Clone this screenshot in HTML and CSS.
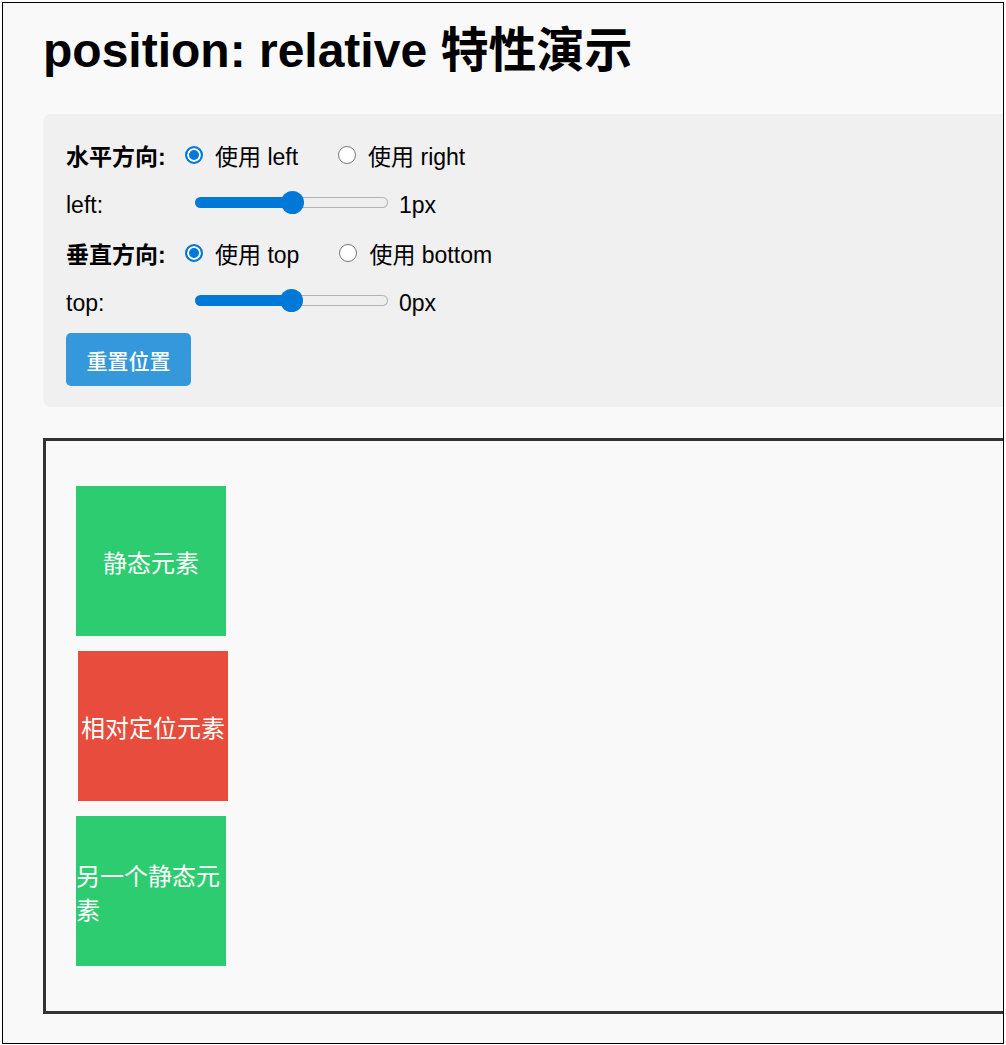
FILE: index.html
```html
<!DOCTYPE html>
<html>
	<head>
		<meta charset='utf-8' />
		<title>position: relative 特性演示</title>
		<link rel="stylesheet" href="styles.css">
	</head>
	<body>
		<div class="window">
			<div class="page">
				<h1>position: relative 特性演示</h1>

				<div class="controls">
					<div class="row row-choice">
						<span class="label strong">水平方向:</span>
						<label class="opt"><input type="radio" name="horizontal" checked />使用 left</label>
						<label class="opt"><input type="radio" name="horizontal" />使用 right</label>
					</div>
					<div class="row">
						<span class="label">left:</span>
						<input type="range" class="slider" min="-100" max="100" value="1" style="--fill:50.3%" />
						<span class="val">1px</span>
					</div>
					<div class="row row-choice">
						<span class="label strong">垂直方向:</span>
						<label class="opt"><input type="radio" name="vertical" checked />使用 top</label>
						<label class="opt"><input type="radio" name="vertical" />使用 bottom</label>
					</div>
					<div class="row">
						<span class="label">top:</span>
						<input type="range" class="slider" min="-100" max="100" value="0" style="--fill:50%" />
						<span class="val">0px</span>
					</div>
					<button type="button" class="reset">重置位置</button>
				</div>

				<div class="stage">
					<div class="box box-static">静态元素</div>
					<div class="box box-relative">相对定位元素</div>
					<div class="box box-static">另一个静态元素</div>
				</div>
			</div>
		</div>
	</body>
</html>
```

FILE: styles.css
```css
body {
	margin: 0;
	background-color: #fff;
	font-family: "Liberation Sans", Arial, "Noto Sans CJK SC", sans-serif;
	color: #000;
}
.window {
	margin: 2px;
	height: 1040px;
	border: 1px solid #000;
	background-color: #f9f9f9;
	overflow: hidden;
}
.page {
	width: 1100px;
	padding: 0 40px;
}
h1 {
	margin: 20px 0 35px;
	font-size: 48px;
	line-height: 56px;
	font-weight: bold;
}

/* 控制面板 */
.controls {
	padding: 24px 23px 21px;
	background-color: #f0f0f0;
	border-radius: 8px;
	font-size: 23px;
}
.row {
	display: flex;
	align-items: center;
	box-sizing: border-box;
	height: 37px;
	margin-bottom: 12px;
}
.row-choice {
	padding-bottom: 4px;
}
.label {
	width: 119px;
}
.strong {
	font-weight: bold;
}
.opt {
	display: flex;
	align-items: center;
	margin-right: 40px;
}
.opt input {
	appearance: none;
	-webkit-appearance: none;
	width: 18px;
	height: 18px;
	margin: 1px 12px 0 0;
	border: 1px solid #767676;
	border-radius: 50%;
	background-color: #fff;
}
.opt input:checked {
	border: 2px solid #0078d7;
	background-color: #0078d7;
	box-shadow: inset 0 0 0 2px #fff;
}
.slider {
	-webkit-appearance: none;
	appearance: none;
	width: 193px;
	height: 23px;
	margin: -6px 11px 0 10px;
	background: transparent;
}
.slider::-webkit-slider-runnable-track {
	box-sizing: border-box;
	height: 11px;
	border: 1px solid transparent;
	border-radius: 6px;
	background: linear-gradient(#0078d7, #0078d7) border-box 0 0 / var(--fill) 100% no-repeat,
		linear-gradient(#efefef, #efefef) padding-box,
		#b2b2b2;
}
.slider::-webkit-slider-thumb {
	-webkit-appearance: none;
	width: 23px;
	height: 23px;
	margin-top: -7px;
	border: none;
	border-radius: 50%;
	background-color: #0078d7;
}
.reset {
	display: block;
	width: 125px;
	height: 53px;
	margin-top: -1px;
	border: none;
	border-radius: 5px;
	background-color: #3498db;
	color: #fff;
	font-family: "Liberation Sans", Arial, "Noto Sans CJK SC", sans-serif;
	font-size: 21px;
	font-weight: 500;
}

/* 演示区 */
.stage {
	margin-top: 31px;
	padding: 30px;
	border: 3px solid #333;
	background-color: #f9f9f9;
}
.box {
	display: flex;
	align-items: center;
	justify-content: center;
	box-sizing: border-box;
	width: 150px;
	height: 150px;
	margin: 15px 0;
	padding-top: 6px;
	color: #fff;
	font-size: 24px;
	line-height: 1.4;
}
.box-static {
	background-color: #2ecc71;
}
.box-relative {
	position: relative;
	left: 2px;
	top: 0;
	background-color: #e74c3c;
}
```
